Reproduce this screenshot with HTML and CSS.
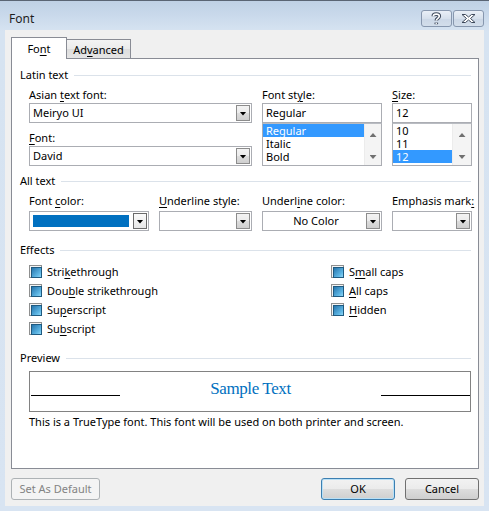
FILE: index.html
```html
<!DOCTYPE html>
<html>
<head>
<meta charset="utf-8">
<title>Font</title>
<link rel="stylesheet" href="styles.css">
</head>
<body>
<div class="window">
  <div class="titlebar">
    <span class="title">Font</span>
    <div class="caption-btns">
      <span class="cbtn">
        <svg width="29" height="15" viewBox="0 0 29 15">
          <path d="M11.3 5.3 C11.3 2.4 17.3 2.4 17.3 5.3 C17.3 7.3 14.3 7.3 14.3 9.6" fill="none" stroke="#3f4a5c" stroke-width="3.6"/>
          <path d="M14.3 11.6 L14.3 13.2" fill="none" stroke="#3f4a5c" stroke-width="3.6"/>
          <path d="M11.3 5.3 C11.3 2.4 17.3 2.4 17.3 5.3 C17.3 7.3 14.3 7.3 14.3 9.6" fill="none" stroke="#fff" stroke-width="1.6"/>
          <path d="M14.3 11.9 L14.3 12.9" fill="none" stroke="#fff" stroke-width="1.6"/>
        </svg>
      </span>
      <span class="cbtn">
        <svg width="29" height="15" viewBox="0 0 29 15">
          <polygon points="8,3.5 11.5,3.5 14.5,6 17.5,3.5 21,3.5 16.5,7.5 21,11.5 17.5,11.5 14.5,9 11.5,11.5 8,11.5 12.5,7.5" fill="#fff" stroke="#3f4a5c" stroke-width="1" stroke-linejoin="round"/>
        </svg>
      </span>
    </div>
  </div>
  <div class="client">
    <div class="tabs">
      <div class="tab active">Fo<u>n</u>t</div>
      <div class="tab">Ad<u>v</u>anced</div>
    </div>
    <div class="panel">
      <div class="group-title">Latin text</div>
      <div class="latin-grid">
        <div class="lbl l-asian">Asian <u>t</u>ext font:</div>
        <div class="combo c-asian"><span class="val">Meiryo UI</span><span class="dd"><i class="tri"></i></span></div>
        <div class="lbl l-font"><u>F</u>ont:</div>
        <div class="combo c-font"><span class="val">David</span><span class="dd"><i class="tri"></i></span></div>
        <div class="lbl l-style">Font st<u>y</u>le:</div>
        <div class="edit e-style">Regular</div>
        <div class="list li-style">
          <div class="items">
            <div class="item sel">Regular</div>
            <div class="item">Italic</div>
            <div class="item">Bold</div>
          </div>
          <div class="sb"><i class="up"></i><i class="down"></i></div>
        </div>
        <div class="lbl l-size"><u>S</u>ize:</div>
        <div class="edit e-size">12</div>
        <div class="list li-size">
          <div class="items">
            <div class="item">10</div>
            <div class="item">11</div>
            <div class="item sel">12</div>
          </div>
          <div class="sb"><i class="up"></i><i class="down"></i></div>
        </div>
      </div>

      <div class="group-title gt-all">All text</div>
      <div class="all-grid">
        <div class="lbl">Font <u>c</u>olor:</div>
        <div class="lbl"><u>U</u>nderline style:</div>
        <div class="lbl">Underl<u>i</u>ne color:</div>
        <div class="lbl">Emphasis mark<u>:</u></div>
        <div class="combo"><span class="swatch"></span><span class="dd dark"><i class="tri"></i></span></div>
        <div class="combo"><span class="val"></span><span class="dd"><i class="tri"></i></span></div>
        <div class="combo"><span class="val center">No Color</span><span class="dd"><i class="tri"></i></span></div>
        <div class="combo"><span class="val"></span><span class="dd"><i class="tri"></i></span></div>
      </div>

      <div class="group-title gt-effects">Effects</div>
      <div class="effects">
        <div class="check"><span class="cb"></span><span class="ct">Stri<u>k</u>ethrough</span></div>
        <div class="check"><span class="cb"></span><span class="ct">Dou<u>b</u>le strikethrough</span></div>
        <div class="check"><span class="cb"></span><span class="ct">Su<u>p</u>erscript</span></div>
        <div class="check"><span class="cb"></span><span class="ct">Su<u>b</u>script</span></div>
        <div class="check"><span class="cb"></span><span class="ct">S<u>m</u>all caps</span></div>
        <div class="check"><span class="cb"></span><span class="ct"><u>A</u>ll caps</span></div>
        <div class="check"><span class="cb"></span><span class="ct"><u>H</u>idden</span></div>
      </div>

      <div class="group-title gt-preview">Preview</div>
      <div class="preview">
        <span class="pline left"></span>
        <span class="sample">Sample Text</span>
        <span class="pline right"></span>
      </div>
      <div class="desc">This is a TrueType font. This font will be used on both printer and screen.</div>
    </div>
    <div class="footer">
      <div class="btn disabled">Set As Default</div>
      <div class="btn default">OK</div>
      <div class="btn">Cancel</div>
    </div>
  </div>
</div>
</body>
</html>
```
FILE: styles.css
```css
* { box-sizing: border-box; }
html, body { margin: 0; padding: 0; }
body {
  width: 489px;
  height: 511px;
  overflow: hidden;
  background: #d6e3f1;
  font-family: "Noto Sans", "Segoe UI", sans-serif;
  font-size: 11px;
  color: #000;
}
u { text-decoration: underline; text-underline-offset: 2px; }

.window {
  height: 511px;
  border-top: 1px solid #5a6574;
  background: linear-gradient(#bfd1e5 0, #c9d9eb 14px, #d6e3f1 30px, #d8e4f2 100%);
}

.titlebar {
  height: 29px;
  display: flex;
  align-items: flex-start;
}
.title {
  margin: 10px 0 0 9px;
  font-size: 12px;
  line-height: 15px;
  color: #1e1e1e;
}
.caption-btns {
  margin: 9px 5px 0 auto;
  display: flex;
  gap: 1px;
}
.cbtn {
  width: 31px;
  height: 17px;
  border: 1px solid #8797ae;
  border-radius: 3px;
  background: linear-gradient(#e9eff7, #d6e0ec 50%, #cbd7e6 51%, #d3deeb);
  display: block;
}
.cbtn svg { display: block; }

.client {
  margin: 0 5px;
  height: 476px;
  background: #f0f0f0;
  padding: 7px 5px 0 6px;
}

.tabs {
  display: flex;
  align-items: flex-end;
  height: 21px;
}
.tab {
  border: 1px solid #898c95;
  border-bottom: none;
  text-align: center;
  line-height: 16px;
}
.tab.active {
  position: relative;
  z-index: 1;
  width: 56px;
  height: 22px;
  margin-bottom: -1px;
  background: #fff;
  padding-top: 3px;
}
.tab:not(.active) {
  width: 65px;
  height: 19px;
  margin-left: -1px;
  background: linear-gradient(#f3f3f3, #ebebeb 50%, #dddddd 51%, #e5e5e5);
  padding-top: 2px;
}

.panel {
  height: 411px;
  border: 1px solid #898c95;
  background: #fff;
  padding: 8px 6px 0 8px;
}

.group-title {
  display: flex;
  align-items: center;
  height: 16px;
  line-height: 16px;
  white-space: nowrap;
}
.group-title::after {
  content: "";
  flex: 1;
  height: 1px;
  background: #dbe2ea;
  margin: 1px 1px 0 6px;
}
.gt-all { margin-top: 7px; }
.gt-effects { margin-top: 11px; }
.gt-preview { margin-top: 12px; }

.lbl {
  line-height: 16px;
  white-space: nowrap;
}

.latin-grid {
  margin: 4px 0 0 9px;
  display: grid;
  grid-template-columns: 120px 93px 120px 80px;
  grid-template-rows: 16px 20px 7px 16px 20px;
  column-gap: 10px;
}
.l-asian { grid-column: 1 / 3; grid-row: 1; }
.c-asian { grid-column: 1 / 3; grid-row: 2; }
.l-font { grid-column: 1 / 3; grid-row: 4; }
.c-font { grid-column: 1 / 3; grid-row: 5; }
.l-style { grid-column: 3; grid-row: 1; }
.e-style { grid-column: 3; grid-row: 2; }
.li-style { grid-column: 3; grid-row: 3 / 6; }
.l-size { grid-column: 4; grid-row: 1; }
.e-size { grid-column: 4; grid-row: 2; }
.li-size { grid-column: 4; grid-row: 3 / 6; }

.combo, .edit {
  height: 20px;
  border: 1px solid #abadb3;
  background: #fff;
}
.combo {
  display: flex;
  align-items: center;
}
.combo .val {
  flex: 1;
  padding-left: 3px;
  line-height: 18px;
  white-space: nowrap;
}
.combo .val.center { text-align: center; }
.edit {
  padding-left: 3px;
  line-height: 18px;
}
.dd {
  width: 14px;
  height: 16px;
  margin-right: 1px;
  border: 1px solid #8c8c8c;
  background: linear-gradient(#f3f3f3, #ebebeb 50%, #dddddd 51%, #cfcfcf);
  display: flex;
  align-items: center;
  justify-content: center;
}
.dd.dark { border-color: #6a6a6a; background: linear-gradient(#fbfbfb, #e6e6e6); }
.tri {
  display: block;
  width: 7px;
  height: 4px;
  background: #000;
  clip-path: polygon(0 0, 100% 0, 50% 100%);
  margin-top: 1px;
}
.swatch {
  flex: 1;
  height: 12px;
  margin: 0 4px 0 3px;
  background: #0070c0;
}

.list {
  display: flex;
  border: 1px solid #abadb3;
  border-top-color: #b9bcc2;
  background: #fff;
}
.items { flex: 1; }
.item {
  height: 13px;
  line-height: 13px;
  padding-left: 3px;
  white-space: nowrap;
}
.item.sel { background: #3399ff; color: #fff; }
.sb {
  width: 17px;
  background: #f4f4f4;
  border-left: 1px solid #ececec;
  display: flex;
  flex-direction: column;
  align-items: center;
  justify-content: space-between;
  padding: 9px 0 6px;
}
.sb i {
  display: block;
  width: 7px;
  height: 4px;
  background: #707070;
}
.sb .up { clip-path: polygon(50% 0, 100% 100%, 0 100%); }
.sb .down { clip-path: polygon(0 0, 100% 0, 50% 100%); }
.li-size .sb { width: 19px; }

.all-grid {
  margin: 4px 0 0 9px;
  display: grid;
  grid-template-columns: 120px 93px 120px 80px;
  grid-template-rows: 18px 20px;
  column-gap: 10px;
}

.effects {
  margin: 4px 0 0 9px;
  display: grid;
  grid-template-columns: 302px auto;
  grid-template-rows: repeat(4, 19px);
  grid-auto-flow: column;
}
.check {
  display: flex;
  align-items: center;
  gap: 5px;
  white-space: nowrap;
}
.cb {
  width: 13px;
  height: 13px;
  border: 1px solid #8e8f8f;
  background: #f4f4f4;
  padding: 1px;
  flex: none;
}
.cb::after {
  content: "";
  display: block;
  width: 9px;
  height: 9px;
  border: 1px solid #1f5a80;
  background: linear-gradient(135deg, #2675ad, #5eb6e4 70%, #8fd6f5);
}

.preview {
  margin: 5px 1px 0 9px;
  height: 41px;
  border: 1px solid #828282;
  display: flex;
  align-items: flex-start;
}
.pline {
  width: 89px;
  height: 1px;
  background: #000;
  margin-top: 23px;
  flex: none;
}
.pline.left { margin-left: 1px; }
.sample {
  flex: 1;
  text-align: center;
  font-family: "Liberation Serif", "Times New Roman", serif;
  font-size: 17px;
  letter-spacing: -0.4px;
  line-height: 20px;
  padding-top: 7px;
  color: #0070c0;
}
.desc {
  margin: 2px 0 0 9px;
  line-height: 16px;
  white-space: nowrap;
}

.footer {
  margin-top: 9px;
  display: flex;
  gap: 10px;
}
.btn {
  width: 74px;
  height: 22px;
  border: 1px solid #707070;
  border-radius: 3px;
  background: linear-gradient(#f2f2f2, #ebebeb 50%, #dddddd 51%, #cfcfcf);
  text-align: center;
  line-height: 20px;
}
.btn.disabled {
  width: 89px;
  margin-right: auto;
  border-color: #adb2b5;
  background: #f4f4f4;
  color: #838383;
}
.btn.default {
  border-color: #3c7fb1;
  box-shadow: inset 0 0 0 1px #b9e0f6;
}
```
